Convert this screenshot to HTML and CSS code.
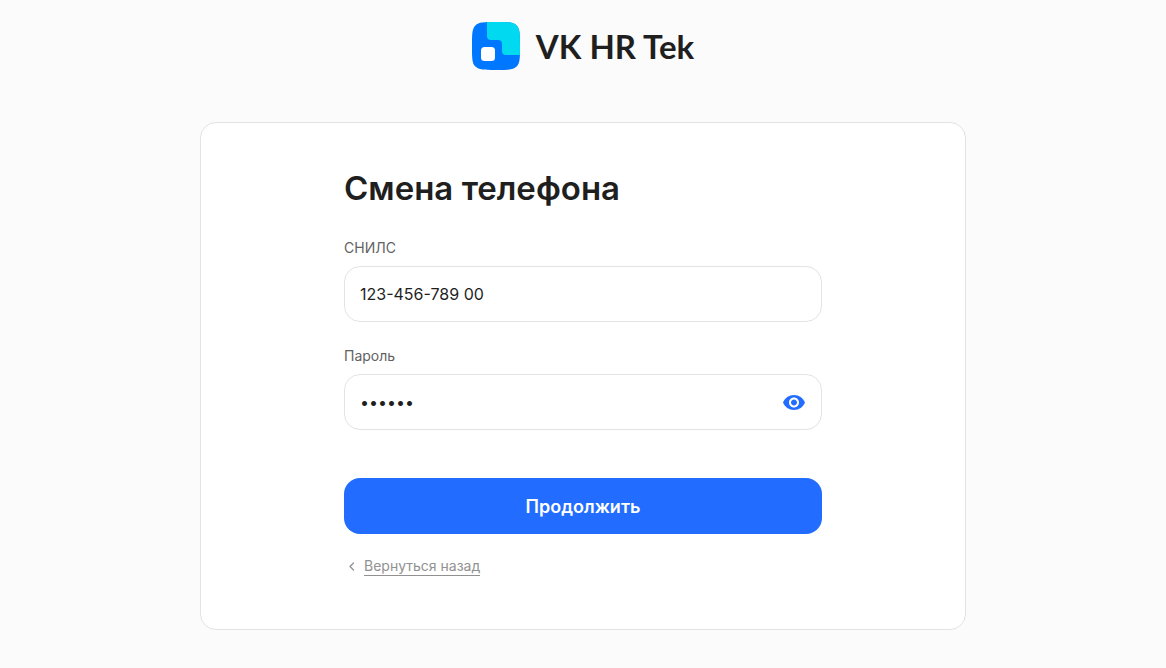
FILE: index.html
```html
<!DOCTYPE html>
<html lang="ru">
<head>
<meta charset="utf-8">
<meta name="viewport" content="width=device-width, initial-scale=1">
<title>Смена телефона</title>
<link rel="stylesheet" href="styles.css">
</head>
<body class="page">
<header class="brand">
  <svg class="brand-logo" viewBox="0 0 48 48" aria-hidden="true">
    <path fill="#0077ff" d="M0 23C0 12 0 6.800 3.400 3.400S12 0 23 0h2c11 0 16.200 0 19.600 3.400S48 12 48 23v2c0 11 0 16.200-3.400 19.600S36 48 25 48h-2C12 48 6.800 48 3.400 44.600S0 36 0 25z"/>
    <path fill="#00d9f0" d="M15 .1C17.300 0 20 0 23 0h2c11 0 16.200 0 19.600 3.400S48 12 48 23v2c0 3 0 5.700-.1 8H34c-2.700 0-4-1.300-4-4v-7c0-2.700-1.300-4-4-4h-7c-2.700 0-4-1.300-4-4z"/>
    <rect x="9" y="25" width="14" height="14" rx="3.500" fill="#fff"/>
  </svg>
  <span class="brand-name">VK HR Tek</span>
</header>
<main class="card">
  <form class="form">
    <h1 class="title">Смена телефона</h1>
    <div class="field">
      <label class="label" for="snils">СНИЛС</label>
      <input class="input" id="snils" type="text" value="123-456-789 00">
    </div>
    <div class="field">
      <label class="label" for="password">Пароль</label>
      <div class="input-wrap">
        <input class="input input-password" id="password" type="password" value="123456">
        <button class="reveal" type="button" aria-label="Показать пароль">
          <svg class="reveal-icon" viewBox="0 0 24 24" aria-hidden="true">
            <path fill="currentColor" fill-rule="evenodd" d="M12 5C7 5 2.730 8.110 1 12.500c1.730 4.390 6 7.500 11 7.500s9.270-3.110 11-7.500C21.270 8.110 17 5 12 5zM12 17.500c-2.760 0-5-2.240-5-5s2.240-5 5-5 5 2.240 5 5-2.240 5-5 5zm0-8c-1.660 0-3 1.340-3 3s1.340 3 3 3 3-1.340 3-3-1.340-3-3-3z"/>
          </svg>
        </button>
      </div>
    </div>
    <button class="submit" type="submit">Продолжить</button>
    <a class="back" href="#">
      <svg class="back-icon" viewBox="0 0 16 16" aria-hidden="true"><path d="M9.500 4 6 7.500 9.500 11" fill="none" stroke="currentColor" stroke-width="1.300" stroke-linecap="round" stroke-linejoin="round"/></svg>
      <span class="back-text">Вернуться назад</span>
    </a>
  </form>
</main>
</body>
</html>
```
FILE: styles.css
```css
* {
  box-sizing: border-box;
}

.page {
  margin: 0;
  padding: 22px 16px 38px;
  background: #fbfbfb;
  color: #1f1f1f;
  font-family: Inter, "Liberation Sans", sans-serif;
}

.brand {
  display: flex;
  align-items: center;
  justify-content: center;
  gap: 16px;
}

.brand-logo {
  width: 48px;
  height: 48px;
}

.brand-name {
  font-family: Lato, Inter, sans-serif;
  font-size: 33px;
  line-height: 48px;
  font-weight: 700;
}

.card {
  max-width: 766px;
  margin: 52px auto 0;
  padding: 40px 16px 53px;
  background: #fff;
  border: 1px solid #e1e3e6;
  border-radius: 16px;
}

.form {
  display: flex;
  flex-direction: column;
  max-width: 478px;
  margin: 0 auto;
}

.title {
  margin: 0 0 24px;
  font-size: 33px;
  line-height: 51px;
  font-weight: 600;
}

.field {
  margin-bottom: 24px;
}

.label {
  display: block;
  margin-bottom: 8px;
  color: #626262;
  font-size: 14px;
  line-height: 20px;
}

.input-wrap {
  position: relative;
}

.input {
  display: block;
  width: 100%;
  height: 56px;
  padding: 0 15px;
  border: 1px solid #e1e3e6;
  border-radius: 16px;
  background: #fff;
  color: #1f1f1f;
  font-family: inherit;
  font-size: 16px;
  outline: none;
}

.input-password {
  padding-right: 48px;
}

.reveal {
  position: absolute;
  top: 16px;
  right: 16px;
  width: 24px;
  height: 24px;
  padding: 0;
  border: 0;
  background: none;
  color: #226dff;
  cursor: pointer;
}

.reveal-icon {
  display: block;
  width: 24px;
  height: 24px;
}

.submit {
  height: 56px;
  margin-top: 24px;
  border: 0;
  border-radius: 16px;
  background: #226dff;
  color: #fff;
  font-family: inherit;
  font-size: 18px;
  font-weight: 600;
  cursor: pointer;
}

.back {
  display: flex;
  align-items: center;
  align-self: flex-start;
  gap: 4px;
  margin-top: 23px;
  color: #919191;
  font-size: 14px;
  line-height: 20px;
  text-decoration: none;
}

.back-icon {
  width: 16px;
  height: 16px;
}

.back-text {
  border-bottom: 1px solid currentColor;
  line-height: 18px;
}
```
